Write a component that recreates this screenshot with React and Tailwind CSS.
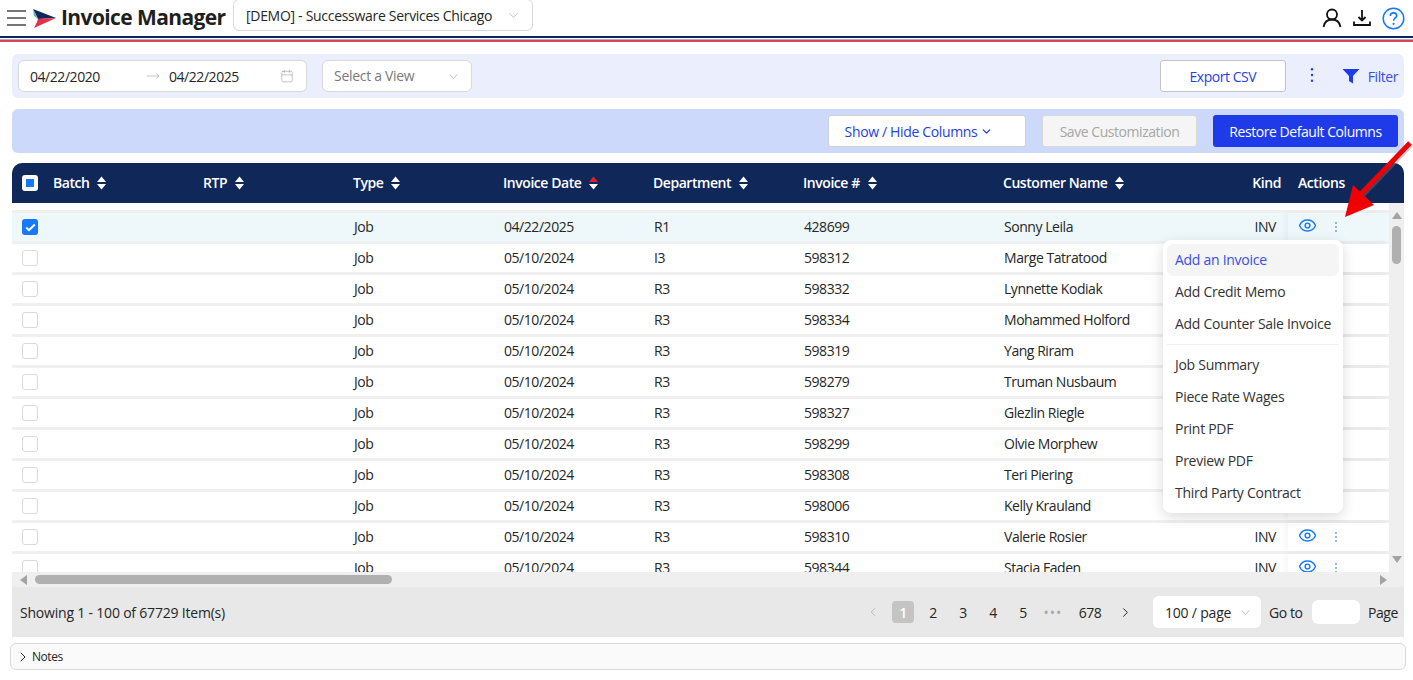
import React from "react";
import { Eye, ChevronDown, ChevronRight, ChevronLeft, Calendar, MoveRight } from "lucide-react";

const GRID = "grid grid-cols-[41px_150px_150px_150px_150px_150px_200px_200px_95px_91px]";

const rows = [
  ["04/22/2025", "R1", "428699", "Sonny Leila"],
  ["05/10/2024", "I3", "598312", "Marge Tatratood"],
  ["05/10/2024", "R3", "598332", "Lynnette Kodiak"],
  ["05/10/2024", "R3", "598334", "Mohammed Holford"],
  ["05/10/2024", "R3", "598319", "Yang Riram"],
  ["05/10/2024", "R3", "598279", "Truman Nusbaum"],
  ["05/10/2024", "R3", "598327", "Glezlin Riegle"],
  ["05/10/2024", "R3", "598299", "Olvie Morphew"],
  ["05/10/2024", "R3", "598308", "Teri Piering"],
  ["05/10/2024", "R3", "598006", "Kelly Krauland"],
  ["05/10/2024", "R3", "598310", "Valerie Rosier"],
  ["05/10/2024", "R3", "598344", "Stacia Faden"],
];

function Sort({ active }) {
  return (
    <svg width="9" height="14" viewBox="0 0 9 14" className="ml-[8px] shrink-0">
      <path d="M4.5 0.5 L9 6 H0 Z" fill={active ? "#e11d2e" : "#ffffff"} />
      <path d="M4.5 13.5 L9 8 H0 Z" fill="#ffffff" />
    </svg>
  );
}

function Dots({ className, r = 1.2, h = 14 }) {
  const step = (h - 2 * r - 2) / 2;
  return (
    <svg width="4" height={h} viewBox={`0 0 4 ${h}`} className={className}>
      <circle cx="2" cy={1 + r} r={r} fill="currentColor" />
      <circle cx="2" cy={1 + r + step} r={r} fill="currentColor" />
      <circle cx="2" cy={1 + r + 2 * step} r={r} fill="currentColor" />
    </svg>
  );
}

function Head({ label, active }) {
  return (
    <div className="flex items-center">
      <span className="-mt-px">{label}</span>
      <Sort active={active} />
    </div>
  );
}

function Row({ row, selected }) {
  return (
    <div className={`${GRID} h-[28px] mb-[3px] items-center text-[14px] text-[#262626] ${selected ? "bg-[#eef7f9]" : "bg-white"}`}>
      <div className="pl-[10px]">
        {selected ? (
          <div className="w-4 h-4 rounded-[3px] bg-[#1677ff] flex items-center justify-center">
            <svg width="11" height="9" viewBox="0 0 11 9"><path d="M1.2 4.5 L4 7.2 L9.8 1.5" stroke="#fff" strokeWidth="2" fill="none" /></svg>
          </div>
        ) : (
          <div className="w-4 h-4 rounded-[3px] border border-[#d9d9d9] bg-white" />
        )}
      </div>
      <div />
      <div />
      <div className="-mt-px pl-px">Job</div>
      <div className="pl-px -mt-px">{row[0]}</div>
      <div className="pl-px -mt-px">{row[1]}</div>
      <div className="pl-px -mt-px">{row[2]}</div>
      <div className="pl-px -mt-px">{row[3]}</div>
      <div className="text-right pr-[22px] -mt-px">INV</div>
      <div className={`h-full -ml-[10px] pl-[10px] flex items-center shadow-[-3px_0_6px_rgba(0,0,0,0.04)] ${selected ? "bg-[#eef7f9]" : "bg-white"}`}>
        <Eye size={19} strokeWidth={1.8} className="text-[#1677ff] -mt-[3px]" />
        <Dots r={1} h={12} className="text-[#6aa5dc] ml-[17px]" />
      </div>
    </div>
  );
}

const menuTop = ["Add an Invoice", "Add Credit Memo", "Add Counter Sale Invoice"];
const menuBottom = ["Job Summary", "Piece Rate Wages", "Print PDF", "Preview PDF", "Third Party Contract"];

export default function App() {
  return (
    <div className="relative w-[1413px] h-[680px] overflow-hidden bg-white font-['Open_Sans','Noto_Sans',sans-serif] text-[14px] tracking-[-0.45px]">
      {/* Top bar */}
      <header className="h-[36px] flex items-center pl-[7px] pr-[8px]">
        <div className="flex flex-col gap-[5px] w-[19px]">
          <div className="h-[2px] bg-[#777777]" />
          <div className="h-[2px] bg-[#777777]" />
          <div className="h-[2px] bg-[#777777]" />
        </div>
        <svg width="24" height="22" viewBox="0 0 24 22" className="ml-[6px]">
          <path d="M1 2 L24 11 L6 12 Z" fill="#10275a" />
          <path d="M1 2 L6 12 L2 9 Z" fill="#5fb6c9" />
          <path d="M6 12 L24 11 L2 21 L5 15 Z" fill="#e8304a" />
        </svg>
        <div className="ml-[5px] w-[169px] whitespace-nowrap text-[21px] font-bold text-[#1f1f1f] tracking-[-0.6px]">Invoice Manager</div>
        <div className="ml-[3px] -mt-[6px] w-[300px] h-[32px] flex items-center justify-between pl-[12px] pr-[11px] border border-[#d9d9d9] rounded-md text-[#262626] tracking-[-0.3px]">
          <span>[DEMO] - Successware Services Chicago</span>
          <ChevronDown size={15} strokeWidth={1} className="text-[#a0a0a0]" />
        </div>
        <div className="ml-auto flex items-center">
          <svg width="20" height="20" viewBox="0 0 20 20" fill="none" stroke="#111" strokeWidth="1.8">
            <circle cx="10" cy="6.5" r="5" />
            <path d="M1.5 19 C2.5 13.5 6 11.5 10 11.5 C14 11.5 17.5 13.5 18.5 19" />
          </svg>
          <svg width="18" height="18" viewBox="0 0 18 18" fill="none" stroke="#111" strokeWidth="1.8" className="ml-[11px]">
            <path d="M9 1 V11 M5.5 8 L9 11.5 L12.5 8" />
            <path d="M1 12.5 V16 H17 V12.5" />
          </svg>
          <svg width="23" height="23" viewBox="0 0 23 23" fill="none" className="ml-[11px]">
            <circle cx="11.5" cy="11.5" r="10.3" stroke="#1677ff" strokeWidth="1.5" />
            <path d="M8.3 9 C8.3 6.9 9.8 5.9 11.5 5.9 C13.3 5.9 14.7 7 14.7 8.7 C14.7 11 11.6 11 11.6 13.8" stroke="#1677ff" strokeWidth="1.6" />
            <circle cx="11.6" cy="16.8" r="1.1" fill="#1677ff" />
          </svg>
        </div>
      </header>

      {/* Brand stripes */}
      <div className="h-[2px] bg-[#10275a]" />
      <div className="h-px bg-white" />
      <div className="h-px bg-[#9db7c4]" />
      <div className="h-[2px] bg-[#e0405a]" />

      {/* Filter bar */}
      <div className="mt-[12px] mx-[12px] w-[1392px] h-[44px] rounded-md bg-[#ebeffd] flex items-center pl-[6px] pr-[6px]">
        <div className="w-[289px] h-[32px] rounded-md border border-[#d9d9d9] bg-white flex items-center pl-[11px] pr-[12px] text-[#262626]">
          <span className="w-[116px]">04/22/2020</span>
          <MoveRight size={14} strokeWidth={1} className="text-[#a0a0a0]" />
          <span className="ml-[9px]">04/22/2025</span>
          <Calendar size={14} strokeWidth={1} className="ml-auto text-[#a0a0a0]" />
        </div>
        <div className="ml-[15px] w-[150px] h-[32px] rounded-md border border-[#d9d9d9] bg-white flex items-center justify-between pl-[11px] pr-[10px] text-[#7a7a7a] tracking-[-0.3px]">
          <span className="-mt-px">Select a View</span>
          <ChevronDown size={15} strokeWidth={1} className="text-[#a0a0a0]" />
        </div>
        <button className="ml-auto w-[126px] h-[32px] rounded-[3px] border border-[#c4c4c4] bg-white text-[#2540e8]">Export CSV</button>
        <Dots h={16} className="ml-[24px] text-[#2540e8] -mt-[3px]" />
        <svg width="18" height="16" viewBox="0 0 18 16" className="ml-[28px]">
          <path d="M0.5 1 H17.5 L11 8 V15.5 L7 13 V8 Z" fill="#1d3ce8" />
        </svg>
        <span className="ml-[8px] text-[#3550e8]">Filter</span>
      </div>

      {/* Columns bar */}
      <div className="mt-[11px] mx-[12px] w-[1392px] h-[44px] rounded-md bg-[#ccd9fb] flex items-center justify-end pr-[6px]">
        <button className="w-[198px] h-[32px] rounded-[3px] border border-[#d0d0d0] bg-white text-[#2540e8] tracking-[-0.35px] flex items-center justify-center gap-[3px] pr-[16px]">
          Show / Hide Columns <ChevronDown size={13} strokeWidth={2.5} />
        </button>
        <button className="ml-[16px] w-[155px] h-[32px] rounded-[3px] border border-[#d9d9d9] bg-[#f5f5f5] text-[#a6a6a6]">Save Customization</button>
        <button className="ml-[16px] w-[185px] h-[32px] rounded-[3px] bg-[#1f3ae8] text-white">Restore Default Columns</button>
      </div>

      {/* Table */}
      <div className="mt-[10px] mx-[12px] w-[1392px]">
        <div className={`${GRID} h-[40px] w-[1392px] items-center rounded-t-[10px] bg-[#10275a] text-white font-semibold`}>
          <div className="pl-[10px]">
            <div className="w-4 h-4 rounded-[3px] bg-white flex items-center justify-center">
              <div className="w-[8px] h-[8px] bg-[#1677ff]" />
            </div>
          </div>
          <Head label="Batch" />
          <Head label="RTP" />
          <Head label="Type" />
          <Head label="Invoice Date" active />
          <Head label="Department" />
          <Head label="Invoice #" />
          <Head label="Customer Name" />
          <div className="text-right pr-[17px] -mt-px">Kind</div>
          <div className="-mt-px">Actions</div>
        </div>

        <div className="flex h-[369px]">
          <div className="w-[1377px] h-[369px] overflow-hidden bg-white pt-[7px]">
            <div className="h-[3px] bg-[#f0f0f0]" />
            <div className="bg-[#f0f0f0]">
              {rows.map((r, i) => (
                <Row key={i} row={r} selected={i === 0} />
              ))}
            </div>
          </div>
          {/* Vertical scrollbar */}
          <div className="w-[15px] h-[369px] bg-[#efefef] flex flex-col items-center pt-[7px] relative">
            <svg width="10" height="7" viewBox="0 0 10 7" className="mt-[2px]"><path d="M5 0 L10 7 H0 Z" fill="#a3a3a3" /></svg>
            <div className="w-[9px] h-[38px] rounded-full bg-[#b0b0b0] mt-[7px]" />
            <svg width="10" height="7" viewBox="0 0 10 7" className="mt-auto mb-[9px]"><path d="M5 7 L10 0 H0 Z" fill="#a3a3a3" /></svg>
          </div>
        </div>

        {/* Horizontal scrollbar */}
        <div className="h-[15px] bg-[#efefef] flex items-center pl-[8px] pr-[5px]">
          <svg width="7" height="10" viewBox="0 0 7 10"><path d="M0 5 L7 0 V10 Z" fill="#a3a3a3" /></svg>
          <div className="ml-[8px] w-[357px] h-[9px] rounded-full bg-[#b0b0b0]" />
          <svg width="7" height="10" viewBox="0 0 7 10" className="ml-auto mr-[12px]"><path d="M7 5 L0 0 V10 Z" fill="#a3a3a3" /></svg>
        </div>

        {/* Footer */}
        <div className="h-[50px] bg-[#e8e8e8] flex items-center pl-[8px] text-[#262626]">
          <span className="mt-px tracking-[-0.2px]">Showing 1 - 100 of 67729 Item(s)</span>
          <div className="ml-auto flex items-center">
            <ChevronLeft size={14} strokeWidth={1.3} className="text-[#a8a8a8] mr-[12px]" />
            <div className="w-[22px] h-[22px] rounded bg-[#c4c4c4] text-white flex items-center justify-center font-semibold">1</div>
            <div className="ml-[4px] w-[30px] text-center pt-px">2</div>
            <div className="w-[30px] text-center pt-px">3</div>
            <div className="w-[30px] text-center pt-px">4</div>
            <div className="w-[30px] text-center pt-px">5</div>
            <div className="w-[30px] text-center text-[#a8a8a8] tracking-[1px]">•••</div>
            <div className="w-[44px] text-center pt-px">678</div>
            <ChevronRight size={15} strokeWidth={1.6} className="ml-[6px] text-[#262626]" />
            <div className="ml-[20px] w-[108px] h-[32px] rounded-md bg-white flex items-center justify-between pl-[12px] pr-[8px]">
              <span className="pt-px tracking-[-0.2px]">100 / page</span>
              <ChevronDown size={15} strokeWidth={1} className="text-[#a0a0a0]" />
            </div>
            <span className="ml-[8px] pt-px w-[35px] whitespace-nowrap">Go to</span>
            <div className="ml-[8px] w-[48px] h-[24px] rounded-md bg-white" />
            <span className="ml-[8px] pt-px mr-[6px] w-[30px] whitespace-nowrap">Page</span>
          </div>
        </div>
      </div>

      {/* Notes */}
      <div className="mt-[6px] ml-[10px] w-[1396px] h-[27px] rounded-md border border-[#d9d9d9] bg-[#fafafa] flex items-center pl-[4px] text-[12px] text-[#262626]">
        <ChevronRight size={16} strokeWidth={1.5} />
        <span className="ml-[1px]">Notes</span>
      </div>

      {/* Dropdown menu */}
      <div className="absolute left-[1163px] top-[240px] w-[180px] h-[273px] rounded-lg bg-white p-[4px] shadow-[0_4px_14px_rgba(0,0,0,0.14)] text-[#333333] whitespace-nowrap tracking-[-0.28px]">
        {menuTop.map((m, i) => (
          <div key={m} className={`h-[32px] flex items-center px-[8px] pb-[2px] rounded-md ${i === 0 ? "bg-[#f5f5f5] text-[#3550e8]" : ""}`}>{m}</div>
        ))}
        <div className="h-px bg-[#f0f0f0] my-[4px]" />
        {menuBottom.map((m) => (
          <div key={m} className="h-[32px] flex items-center px-[8px] pb-[2px]">{m}</div>
        ))}
      </div>

      {/* Annotation arrow */}
      <svg width="80" height="90" viewBox="0 0 80 90" className="absolute left-[1338px] top-[138px]">
        <path d="M73 7 L22 60" stroke="#888" strokeOpacity="0.35" strokeWidth="5" />
        <path d="M72 5 L21 58" stroke="#f00000" strokeWidth="5" />
        <path d="M7 79 L15 47 L36 67 Z" fill="#f00000" />
      </svg>
    </div>
  );
}
